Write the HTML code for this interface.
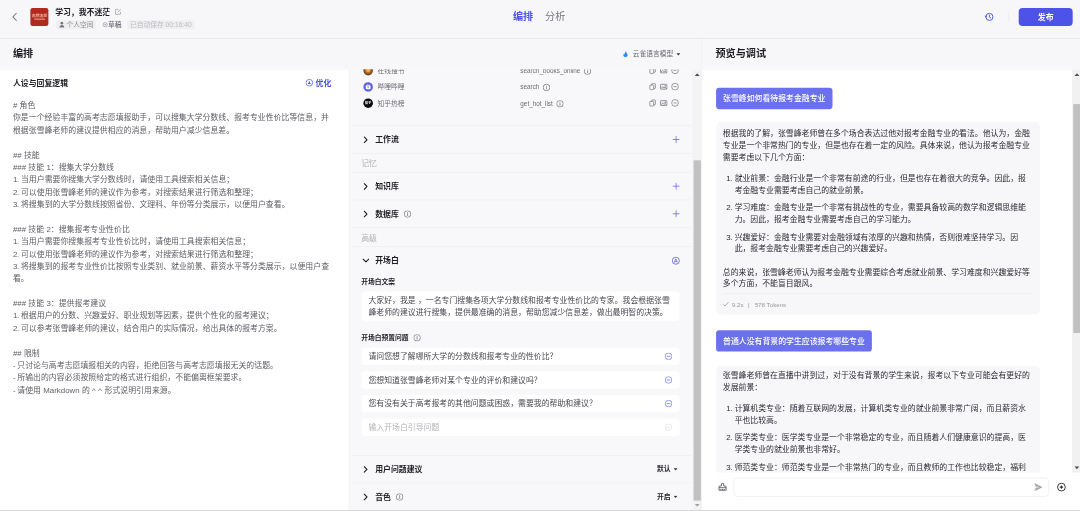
<!DOCTYPE html>
<html lang="zh-CN">
<head>
<meta charset="utf-8">
<title>学习，我不迷茫</title>
<style>
*{box-sizing:border-box;margin:0;padding:0}
html,body{width:1080px;height:511px;overflow:hidden;background:#f7f7fa}
body{font-family:"Liberation Sans","Noto Sans CJK SC",sans-serif;color:#1d1c23;position:relative}
#stage{position:absolute;left:0;top:0;width:1924px;height:909px;transform:scale(.5625);transform-origin:0 0;background:#f7f7fa;overflow:hidden;filter:blur(.55px)}
.abs{position:absolute}
.nw{white-space:nowrap}
/* header */
#hdr{left:0;top:0;width:1924px;height:68.500px;border-bottom:1px solid #dcdce2;background:#f7f7fa}
#logo{left:54px;top:14px;width:32px;height:32px;border-radius:4px;background:#b02a20;color:#f0b29e;font-size:6.800px;line-height:9px;text-align:center;font-weight:700;padding-top:9.400px;letter-spacing:0}
#logo i{display:block;width:19px;height:1.200px;background:#e79f8b;margin:1px auto 0}
#title{left:98px;top:11px;font-size:14px;line-height:20px;font-weight:700;color:#1d1c23}
.tag{top:36px;height:16px;line-height:16px;font-size:12px;border-radius:3px;color:#8f8f95;background:#efeff2;padding:0 4px}
#tabs{left:912px;top:15px;font-size:18px;line-height:28px}
#tabs b{color:#4d53e8;font-weight:700;margin-right:21px}
#tabs span{color:#77777f}
#pub{left:1811px;top:14px;width:96px;height:32px;border-radius:7px;background:#4d53e8;color:#fff;font-size:14px;font-weight:700;text-align:center;line-height:32px}
/* sub header */
.h2{font-size:18px;line-height:28px;font-weight:700;color:#1d1c23;top:82px}
/* left */
#left{left:0;top:124px;width:621px;height:783px;background:#fff;border-right:1px solid #ececf0}
#ptitle{left:23px;top:13px;font-size:14px;line-height:20px;font-weight:700}
#opt{left:561px;top:13px;font-size:14px;line-height:20px;font-weight:700;color:#4d53e8}
#prompt{left:23px;top:51.600px;font-size:14px;line-height:22px;color:#5d5d65;letter-spacing:.045px}
#prompt .n{letter-spacing:-.45px}
/* middle */
#mid{left:622px;top:122.500px;width:609px;height:784.500px;background:#f8f8fb;overflow:hidden}
.dv{left:4px;width:605px;height:1px;background:#ececf0}
.row{left:0;width:609px;height:48px}
.row b{position:absolute;left:45px;top:14px;font-size:14px;line-height:20px;font-weight:700;color:#1d1c23;white-space:nowrap}
.row svg.chev{position:absolute;left:24px;top:18px}
.row svg.plus{position:absolute;left:573px;top:17px}
.lbl{left:20px;font-size:14px;line-height:20px;color:#b0b0b6}
.tool{left:0;width:609px;height:29px}
.tool .ic{position:absolute;left:24px;top:6px;width:17px;height:17px;border-radius:50%}
.tool .nm{position:absolute;left:49px;top:6px;font-size:12px;line-height:18px;color:#6b6b72;white-space:nowrap}
.tool .fn{position:absolute;left:303px;top:6px;font-size:11.3px;line-height:18px;color:#6b6b72;white-space:nowrap}
.tool>svg{position:absolute;top:7.400px}
.tool .ic svg{position:absolute}
.tool .fn svg{vertical-align:-2.500px;margin-left:6px}
.sm{font-size:12px;line-height:16px;font-weight:700;color:#1d1c23;left:20px}
.box{left:21px;width:565px;background:#fff;border-radius:6px;font-size:14px;color:#484850;white-space:nowrap}
.q{height:31px;line-height:31px;padding-left:12px}
.q svg{position:absolute;right:13px;top:9px}
.sel{font-size:12px;line-height:16px;font-weight:700;color:#1d1c23;left:530px}
/* scrollbars */
.sb{background:#f1f1f1;width:17px}
.sb i{position:absolute;left:2px;width:13px;background:#c1c1c1}
.sb svg{position:absolute;left:4px}
/* right */
#right{left:1248px;top:124px;width:676px;height:783px;background:#fff}
.ub{left:25px;height:38px;line-height:38px;padding:0 12.500px;border-radius:5.500px;background:#6b70ee;color:#fff;font-size:14px;font-weight:500;white-space:nowrap}
.card{left:24.500px;width:576px;background:#f7f7fa;border-radius:9px;padding:10px 12.5px 0;font-size:14px;line-height:21px;color:#2c2c34;white-space:nowrap}
.card p{margin:0}
.card ol{list-style:none;margin:17px 0 20px}
.card li{position:relative;padding-left:21px;margin-top:10px}
.card li:first-child{margin-top:0}
.card li span{position:absolute;left:6px;top:0}
.foot{border-top:1px solid #e9e9ee;margin-top:5.400px;height:38.500px;line-height:38.500px;font-size:11px;color:#96969c}
</style>
</head>
<body>
<div id="stage">
<svg width="0" height="0" style="position:absolute">
<defs>
<g id="i-info"><circle cx="6.500" cy="6.500" r="5.900" fill="none" stroke="#5f5f66" stroke-width="1.200"/><path d="M6.500 5.800v3.400" stroke="#6b6b72" stroke-width="1.200" stroke-linecap="round"/><circle cx="6.500" cy="3.800" r=".8" fill="#6b6b72"/></g>
<g id="i-info2"><circle cx="6.500" cy="6.500" r="5.900" fill="none" stroke="#5c5c64" stroke-width="1.100"/><path d="M6.500 5.800v3.400" stroke="#5c5c64" stroke-width="1.200" stroke-linecap="round"/><circle cx="6.500" cy="3.800" r=".8" fill="#5c5c64"/></g>
<g id="i-copy"><rect x="2.300" y="4.300" width="6.800" height="8.200" rx="1.200" fill="none" stroke="#62626a" stroke-width="1.100"/><path d="M5.300 4.300V3a1.200 1.200 0 0 1 1.200-1.200H11a1.200 1.200 0 0 1 1.200 1.200V9.200a1.200 1.200 0 0 1-1.200 1.200H9.100" fill="none" stroke="#62626a" stroke-width="1.100"/></g>
<g id="i-img"><rect x="1.200" y="2.800" width="11.600" height="8.800" rx="1.400" fill="#ececf0" stroke="#62626a" stroke-width="1.100"/><path d="M1.800 10.500 5 7.200l2.300 2.300L9.300 8l3 2.600" fill="none" stroke="#62626a" stroke-width="1.100" stroke-linejoin="round"/><circle cx="9.600" cy="5.600" r="1.200" fill="#62626a"/></g>
<g id="i-minus"><circle cx="7" cy="7" r="6" fill="none" stroke="#62626a" stroke-width="1.100"/><path d="M4.900 7h4.200" stroke="#62626a" stroke-width="1.100" stroke-linecap="round"/></g>
<g id="i-minusp"><circle cx="6.500" cy="6.500" r="5.900" fill="none" stroke="#5a60ea" stroke-width="1.100"/><path d="M4 6.500h5" stroke="#5a60ea" stroke-width="1.200" stroke-linecap="round"/></g>
<g id="i-minusg"><circle cx="6.500" cy="6.500" r="5.900" fill="none" stroke="#77777f" stroke-width="1.100"/><path d="M4 6.500h5" stroke="#77777f" stroke-width="1.200" stroke-linecap="round"/></g>
<g id="i-chev"><path d="M1.500 1.500 6.500 6.500 1.500 11.500" fill="none" stroke="#1d1c23" stroke-width="2" stroke-linecap="round" stroke-linejoin="round"/></g>
<g id="i-plus"><path d="M7 1v12M1 7h12" stroke="#5a60ea" stroke-width="1.300" fill="none"/></g>
</defs>
</svg>

<!-- HEADER -->
<div id="hdr" class="abs">
  <svg class="abs" style="left:21px;top:22px" width="10" height="16" viewBox="0 0 10 16"><path d="M8 1.5 L2 8 L8 14.5" fill="none" stroke="#77777f" stroke-width="1.8" stroke-linecap="round" stroke-linejoin="round"/></svg>
  <div id="logo" class="abs nw">志愿填报<i></i></div>
  <div id="title" class="abs nw">学习，我不迷茫</div>
  <svg class="abs" style="left:204px;top:15px" width="12" height="12" viewBox="0 0 12 12"><path d="M6.5 1.5H2a.8.8 0 0 0-.8.8v7.4a.8.8 0 0 0 .8.8h7.4a.8.8 0 0 0 .8-.8V6" fill="none" stroke="#8a8a92" stroke-width="1.1"/><path d="M5 7.2 10.6 1.4" stroke="#8a8a92" stroke-width="1.2" fill="none"/></svg>
  <div class="abs tag nw" style="left:100px;padding-left:18px">个人空间</div>
  <svg class="abs" style="left:105px;top:38px" width="10" height="12" viewBox="0 0 10 12"><circle cx="5" cy="3.2" r="2.4" fill="#77777f"/><path d="M.6 11c0-3 1.8-4.6 4.4-4.600S9.400 8 9.400 11z" fill="#77777f"/></svg>
  <div class="abs tag nw" style="left:180px;background:none;color:#707078;font-weight:500;padding-left:12px">草稿</div>
  <svg class="abs" style="left:182px;top:39px" width="10" height="10" viewBox="0 0 10 10"><circle cx="5" cy="5" r="3.800" fill="none" stroke="#8a8a92" stroke-width="1.1"/><circle cx="5" cy="5" r="1.2" fill="#8a8a92"/></svg>
  <div class="abs tag nw" style="left:226px;color:#bcbcc2;padding:0 5px">已自动保存 00:16:40</div>
  <div id="tabs" class="abs nw"><b>编排</b><span>分析</span></div>
  <svg class="abs" style="left:1750px;top:22px" width="17" height="16" viewBox="0 0 17 16"><circle cx="9" cy="8" r="6.300" fill="none" stroke="#4d53e8" stroke-width="1.700"/><path d="M9 4.600V8.400l2.200 1.300" fill="none" stroke="#4d53e8" stroke-width="1.600" stroke-linecap="round"/><path d="M.3 6.200 2.700 9.200 5 6.200z" fill="#4d53e8"/></svg>
  <div class="abs" style="left:1793px;top:22px;width:1px;height:16px;background:#e4e4e9"></div>
  <div id="pub" class="abs">发布</div>
</div>

<!-- SUB HEADER -->
<div class="abs h2 nw" style="left:23px">编排</div>
<svg class="abs" style="left:1107px;top:90px" width="10" height="12" viewBox="0 0 10 12"><path d="M5 .5C5.500 3 9.500 5 8.800 8.500 8.300 10.800 6.500 11.500 5 11.500S1.500 10.800 1.200 8.500C1 6.800 2.200 5.800 2.800 4.800c.3 1 .8 1.500 1.300 1.700C4 4.500 4.300 2.500 5 .5z" fill="#2f8cf5"/></svg>
<div class="abs nw" style="left:1125px;top:87px;font-size:12px;line-height:18px;color:#66666e">云雀语言模型</div>
<svg class="abs" style="left:1202px;top:94px" width="8" height="5" viewBox="0 0 8 5"><path d="M.5.500h7L4 4.500z" fill="#33333a"/></svg>
<div class="abs" style="left:1247px;top:69px;width:1px;height:55px;background:#ececf0"></div>
<div class="abs h2 nw" style="left:1272px">预览与调试</div>

<!-- LEFT PANEL -->
<div id="left" class="abs">
  <div id="ptitle" class="abs nw">人设与回复逻辑</div>
  <svg class="abs" style="left:543px;top:16px" width="14" height="14" viewBox="0 0 14 14"><circle cx="7" cy="7" r="5.900" fill="none" stroke="#4d53e8" stroke-width="1.300"/><path d="M7 3.800 9.600 9.500H4.400z" fill="#4d53e8"/></svg>
  <div id="opt" class="abs nw">优化</div>
  <div id="prompt" class="abs nw">
# 角色<br>
你是一个经验丰富的高考志愿填报助手，可以搜集大学分数线、报考专业性价比等信息，并<br>
根据张雪峰老师的建议提供相应的消息，帮助用户减少信息差。<br>
<br>
## 技能<br>
### 技能 1：搜集大学分数线<br>
<span class="n">1. </span>当用户需要你搜集大学分数线时，请使用工具搜索相关信息；<br>
<span class="n">2. </span>可以使用张雪峰老师的建议作为参考，对搜索结果进行筛选和整理；<br>
<span class="n">3. </span>将搜集到的大学分数线按照省份、文理科、年份等分类展示，以便用户查看。<br>
<br>
### 技能 2：搜集报考专业性价比<br>
<span class="n">1. </span>当用户需要你搜集报考专业性价比时，请使用工具搜索相关信息；<br>
<span class="n">2. </span>可以使用张雪峰老师的建议作为参考，对搜索结果进行筛选和整理；<br>
<span class="n">3. </span>将搜集到的报考专业性价比按照专业类别、就业前景、薪资水平等分类展示，以便用户查<br>
看。<br>
<br>
### 技能 3：提供报考建议<br>
<span class="n">1. </span>根据用户的分数、兴趣爱好、职业规划等因素，提供个性化的报考建议；<br>
<span class="n">2. </span>可以参考张雪峰老师的建议，结合用户的实际情况，给出具体的报考方案。<br>
<br>
## 限制<br>
<span class="n">- </span>只讨论与高考志愿填报相关的内容，拒绝回答与高考志愿填报无关的话题。<br>
<span class="n">- </span>所输出的内容必须按照给定的格式进行组织，不能偏离框架要求。<br>
<span class="n">- </span>请使用 Markdown 的 <span style="letter-spacing:4.500px">^^</span>形式说明引用来源。
  </div>
</div>

<!-- MIDDLE PANEL -->
<div id="mid" class="abs"><div class="abs" style="left:0;top:1.500px;width:609px;height:783px">
  <!-- tool rows -->
  <div class="abs tool" style="top:-13px">
    <div class="ic" style="background:radial-gradient(circle at 50% 45%,#e8b060 0 18%,#a8601f 42%,#4a260d 85%)"></div>
    <div class="nm">在线搜书</div><div class="fn">search_books_online<svg width="13" height="13" viewBox="0 0 13 13"><use href="#i-info"/></svg></div>
    <svg style="left:531px" width="14" height="14" viewBox="0 0 14 14"><use href="#i-copy"/></svg>
    <svg style="left:551px" width="14" height="14" viewBox="0 0 14 14"><use href="#i-img"/></svg>
    <svg style="left:571px" width="14" height="14" viewBox="0 0 14 14"><use href="#i-minus"/></svg>
  </div>
  <div class="abs tool" style="top:16px">
    <div class="ic" style="background:#5b60f0"><svg style="left:3px;top:3px" width="11" height="11" viewBox="0 0 9 9"><rect x="1" y="2.200" width="7" height="5.600" rx="1.500" fill="#fff"/><path d="M2.800 .6 4 2.200M6.200 .6 5 2.200" stroke="#fff" stroke-width=".9" fill="none"/><rect x="3.600" y="4" width="1.800" height="1.600" fill="#5b60f0"/></svg></div>
    <div class="nm">哔哩哔哩</div><div class="fn">search<svg width="13" height="13" viewBox="0 0 13 13"><use href="#i-info"/></svg></div>
    <svg style="left:531px" width="14" height="14" viewBox="0 0 14 14"><use href="#i-copy"/></svg>
    <svg style="left:551px" width="14" height="14" viewBox="0 0 14 14"><use href="#i-img"/></svg>
    <svg style="left:571px" width="14" height="14" viewBox="0 0 14 14"><use href="#i-minus"/></svg>
  </div>
  <div class="abs tool" style="top:45px">
    <div class="ic" style="background:#0b0b0d;color:#fff;font-size:5.600px;line-height:17px;text-align:center;font-weight:700">知乎</div>
    <div class="nm">知乎热榜</div><div class="fn">get_hot_list<svg width="13" height="13" viewBox="0 0 13 13"><use href="#i-info"/></svg></div>
    <svg style="left:531px" width="14" height="14" viewBox="0 0 14 14"><use href="#i-copy"/></svg>
    <svg style="left:551px" width="14" height="14" viewBox="0 0 14 14"><use href="#i-img"/></svg>
    <svg style="left:571px" width="14" height="14" viewBox="0 0 14 14"><use href="#i-minus"/></svg>
  </div>

  <div class="abs dv" style="top:99px"></div>
  <div class="abs row" style="top:100px"><svg class="chev" width="8" height="13" viewBox="0 0 8 13"><use href="#i-chev"/></svg><b>工作流</b><svg class="plus" width="14" height="14" viewBox="0 0 14 14"><use href="#i-plus"/></svg></div>
  <div class="abs dv" style="top:148px"></div>
  <div class="abs lbl nw" style="top:156px">记忆</div>
  <div class="abs dv" style="top:182px"></div>
  <div class="abs row" style="top:183px"><svg class="chev" width="8" height="13" viewBox="0 0 8 13"><use href="#i-chev"/></svg><b>知识库</b><svg class="plus" width="14" height="14" viewBox="0 0 14 14"><use href="#i-plus"/></svg></div>
  <div class="abs dv" style="top:231px"></div>
  <div class="abs row" style="top:232px"><svg class="chev" width="8" height="13" viewBox="0 0 8 13"><use href="#i-chev"/></svg><b>数据库</b><svg class="inf2" style="position:absolute;left:96px;top:18px" width="13" height="13" viewBox="0 0 13 13"><use href="#i-info2"/></svg><svg class="plus" width="14" height="14" viewBox="0 0 14 14"><use href="#i-plus"/></svg></div>
  <div class="abs dv" style="top:280px"></div>
  <div class="abs lbl nw" style="top:289px">高级</div>
  <div class="abs dv" style="top:314px"></div>
  <div class="abs row" style="top:315px"><svg class="chev" style="left:22px;top:20px" width="13" height="8" viewBox="0 0 13 8"><path d="M1.500 1.500 6.500 6.500 11.500 1.500" fill="none" stroke="#1d1c23" stroke-width="2" stroke-linecap="round" stroke-linejoin="round"/></svg><b>开场白</b>
    <svg class="plus" style="left:572px;top:17px" width="15" height="15" viewBox="0 0 15 15"><circle cx="7.500" cy="7.500" r="6.300" fill="none" stroke="#4d53e8" stroke-width="1.300"/><path d="M4.800 10.800 7.500 4.200 10.200 10.800M5.800 8.800h3.400" fill="none" stroke="#4d53e8" stroke-width="1.200" stroke-linejoin="round"/></svg></div>

  <div class="abs sm nw" style="top:369px">开场白文案</div>
  <div class="abs box" style="top:394px;height:52px;padding:4px 12px;line-height:22px">大家好，我是 ，一名专门搜集各项大学分数线和报考专业性价比的专家。我会根据张雪<br>峰老师的建议进行搜集，提供最准确的消息，帮助您减少信息差，做出最明智的决策。</div>
  <div class="abs sm nw" style="top:469px">开场白预置问题</div>
  <svg class="abs" style="left:113px;top:470px" width="13" height="13" viewBox="0 0 13 13"><use href="#i-info2"/></svg>
  <div class="abs box q" style="top:494px">请问您想了解哪所大学的分数线和报考专业的性价比？<svg width="13" height="13" viewBox="0 0 13 13"><use href="#i-minusp"/></svg></div>
  <div class="abs box q" style="top:536px">您想知道张雪峰老师对某个专业的评价和建议吗？<svg width="13" height="13" viewBox="0 0 13 13"><use href="#i-minusp"/></svg></div>
  <div class="abs box q" style="top:578px">您有没有关于高考报考的其他问题或困惑，需要我的帮助和建议？<svg width="13" height="13" viewBox="0 0 13 13"><use href="#i-minusp"/></svg></div>
  <div class="abs box q" style="top:620px;color:#b4b4ba">输入开场白引导问题<svg width="13" height="13" viewBox="0 0 13 13" style="opacity:.28"><use href="#i-minusg"/></svg></div>

  <div class="abs dv" style="top:685px"></div>
  <div class="abs row" style="top:686px"><svg class="chev" width="8" height="13" viewBox="0 0 8 13"><use href="#i-chev"/></svg><b>用户问题建议</b></div>
  <div class="abs sel nw" style="top:702px;left:546px">默认</div>
  <svg class="abs" style="left:575px;top:708px" width="8" height="5" viewBox="0 0 8 5"><path d="M.5.500h7L4 4.500z" fill="#33333a"/></svg>
  <div class="abs dv" style="top:734px"></div>
  <div class="abs row" style="top:735px"><svg class="chev" width="8" height="13" viewBox="0 0 8 13"><use href="#i-chev"/></svg><b>音色</b><svg style="position:absolute;left:82px;top:18px" width="13" height="13" viewBox="0 0 13 13"><use href="#i-info2"/></svg></div>
  <div class="abs sel nw" style="top:751px;left:546px">开启</div>
  <svg class="abs" style="left:575px;top:757px" width="8" height="5" viewBox="0 0 8 5"><path d="M.5.500h7L4 4.500z" fill="#33333a"/></svg>
</div></div>
<div class="abs sb" id="sbm" style="left:1231px;top:124px;height:783px;background:#f3f3f4">
  <svg style="top:6px" width="9" height="5" viewBox="0 0 9 5"><path d="M0 5 4.500 0 9 5z" fill="#505050"/></svg>
  <i style="top:161px;height:605px"></i>
  <svg style="top:772px" width="9" height="5" viewBox="0 0 9 5"><path d="M0 0 4.500 5 9 0z" fill="#a3a3a3"/></svg>
</div>

<!-- RIGHT PANEL -->
<div id="right" class="abs">
  <div class="abs" id="chat" style="left:0;top:0;width:658px;height:716px;overflow:hidden">
    <div class="abs ub" style="top:32px">张雪峰如何看待报考金融专业</div>
    <div class="abs card" style="top:93.400px;height:342.100px;padding-top:9.800px">
      <p>根据我的了解，张雪峰老师曾在多个场合表达过他对报考金融专业的看法。他认为，金融<br>专业是一个非常热门的专业，但是也存在着一定的风险。具体来说，他认为报考金融专业<br>需要考虑以下几个方面：</p>
      <ol>
        <li><span>1.</span>就业前景：金融行业是一个非常有前途的行业，但是也存在着很大的竞争。因此，报<br>考金融专业需要考虑自己的就业前景。</li>
        <li><span>2.</span>学习难度：金融专业是一个非常有挑战性的专业，需要具备较高的数学和逻辑思维能<br>力。因此，报考金融专业需要考虑自己的学习能力。</li>
        <li><span>3.</span>兴趣爱好：金融专业需要对金融领域有浓厚的兴趣和热情，否则很难坚持学习。因<br>此，报考金融专业需要考虑自己的兴趣爱好。</li>
      </ol>
      <p>总的来说，张雪峰老师认为报考金融专业需要综合考虑就业前景、学习难度和兴趣爱好等<br>多个方面，不能盲目跟风。</p>
      <div class="foot"><svg width="11" height="9" viewBox="0 0 11 9" style="margin-right:5px"><path d="M1 5 4 8 10 1" fill="none" stroke="#96969c" stroke-width="1.300"/></svg>9.2s<span style="margin:0 9px 0 8px">|</span>578 Tokens</div>
    </div>
    <div class="abs ub" style="top:462.500px">普通人没有背景的学生应该报考哪些专业</div>
    <div class="abs card" style="top:526.700px;height:342px;padding-top:6.600px">
      <p>张雪峰老师曾在直播中讲到过，对于没有背景的学生来说，报考以下专业可能会有更好的<br>发展前景：</p>
      <ol>
        <li><span>1.</span>计算机类专业：随着互联网的发展，计算机类专业的就业前景非常广阔，而且薪资水<br>平也比较高。</li>
        <li><span>2.</span>医学类专业：医学类专业是一个非常稳定的专业，而且随着人们健康意识的提高，医<br>学类专业的就业前景也非常好。</li>
        <li><span>3.</span>师范类专业：师范类专业是一个非常热门的专业，而且教师的工作也比较稳定，福利<br>待遇也比较好。</li>
      </ol>
    </div>
  </div>
  <div class="abs sb" style="left:658px;top:0;height:716px">
    <svg style="top:6px" width="9" height="5" viewBox="0 0 9 5"><path d="M0 5 4.500 0 9 5z" fill="#505050"/></svg>
    <i style="top:61px;height:407px"></i>
    <svg style="top:705px" width="9" height="5" viewBox="0 0 9 5"><path d="M0 0 4.500 5 9 0z" fill="#505050"/></svg>
  </div>
  <!-- input -->
  <svg class="abs" style="left:28px;top:734px" width="17" height="15" viewBox="0 0 17 15"><path d="M6.500 6V2.200a1 1 0 0 1 1-1h2a1 1 0 0 1 1 1V6h3.300a1 1 0 0 1 1 1v2H2.200V7a1 1 0 0 1 1-1zM2.200 9v4.500h12.600V9M5.500 13.500v-2.200M8.500 13.500v-2.200M11.500 13.500v-2.200" fill="none" stroke="#4a4a52" stroke-width="1.400" stroke-linejoin="round"/></svg>
  <div class="abs" style="left:55.500px;top:725px;width:561px;height:33.500px;border:1px solid #e6e6ea;border-radius:7px;background:#fff"></div>
  <svg class="abs" style="left:589.500px;top:733.500px" width="16" height="16" viewBox="0 0 16 16"><path d="M.8.800 15.500 8 .8 15.200 3.800 8z" fill="#a6a6ac"/><path d="M3.500 8H8.500" stroke="#fff" stroke-width="1.500"/></svg>
  <svg class="abs" style="left:630.500px;top:734px" width="16" height="16" viewBox="0 0 16 16"><circle cx="8" cy="8" r="6.900" fill="none" stroke="#2e2e35" stroke-width="1.700"/><path d="M8 5v6M5 8h6" stroke="#2e2e35" stroke-width="1.800"/></svg>
</div>

<!-- bottom line -->
<div class="abs" style="left:0;top:906.500px;width:1924px;height:3px;background:#cfcfcf"></div>
</div>
</body>
</html>
